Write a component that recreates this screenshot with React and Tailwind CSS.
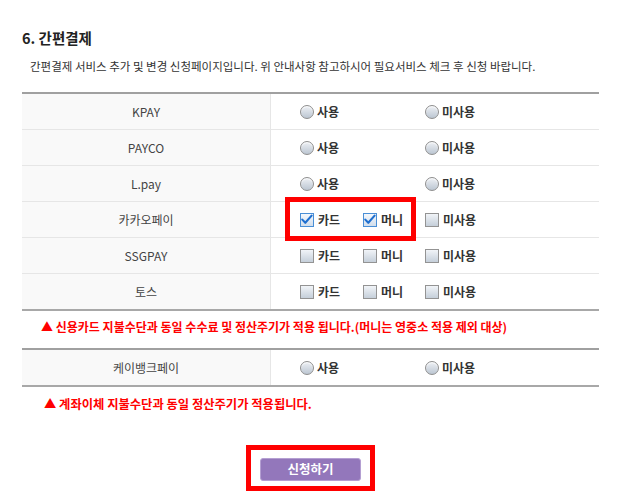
import React from "react";

const FONT = { fontFamily: '"Noto Sans CJK KR", "Noto Sans", sans-serif' };

function Radio({ label }) {
  return (
    <div className="flex items-center">
      <span className="w-[14px] h-[14px] rounded-full border border-[#8e8e8e] bg-gradient-to-b from-[#eef1f5] to-[#bcc6d2] shadow-[inset_0_1px_1px_rgba(255,255,255,0.9)]" />
      <span className="ml-[3px] text-[12px] font-semibold text-[#333] leading-[14px]">{label}</span>
    </div>
  );
}

function Check({ label, checked }) {
  return (
    <div className="flex items-center">
      {checked ? (
        <span className="w-[14px] h-[14px] border border-[#4a8fd6] bg-gradient-to-b from-[#f5f8fc] to-[#d2deec] flex items-center justify-center">
          <svg width="12" height="11" viewBox="0 0 12 11">
            <path d="M1.3 5.6 L4.3 8.8 L10.6 1.6" fill="none" stroke="#1f6fcf" strokeWidth="2.1" strokeLinecap="round" strokeLinejoin="round" />
          </svg>
        </span>
      ) : (
        <span className="w-[14px] h-[14px] border border-[#939393] bg-gradient-to-b from-[#f1f4f8] to-[#c5cfda]" />
      )}
      <span className="ml-[4px] text-[12px] font-semibold text-[#333] leading-[14px]">{label}</span>
    </div>
  );
}

function RadioCell() {
  return (
    <div className="flex items-center">
      <div className="w-[125px]"><Radio label="사용" /></div>
      <Radio label="미사용" />
    </div>
  );
}

function CheckCell({ c1, c2 }) {
  return (
    <div className="flex items-center">
      <div className="w-[63px]"><Check label="카드" checked={c1} /></div>
      <div className="w-[62px]"><Check label="머니" checked={c2} /></div>
      <Check label="미사용" />
    </div>
  );
}

function Row({ name, children, last, frame }) {
  return (
    <div className={`flex h-[36px] ${last ? "h-[37px] border-b-2 border-[#a8a8a8]" : "border-b border-[#e6e6e6]"}`}>
      <div className="w-[249px] bg-[#f9f9f9] border-r border-[#e6e6e6] flex items-center justify-center text-[12px] text-[#444]">
        {name}
      </div>
      <div className="relative flex-1 pl-[29px] flex items-center">
        {children}
        {frame && (
          <div className="absolute left-[14px] top-[-5px] w-[131px] h-[44px] border-[5px] border-[#ff0000]" />
        )}
      </div>
    </div>
  );
}

export default function App() {
  return (
    <div className="w-[620px] h-[500px] bg-white pl-[22px] pr-[21px] overflow-hidden" style={FONT}>
      <h2 className="pt-[28px] h-[48px] text-[14.5px] font-bold leading-[20px] text-[#222]">6. 간편결제</h2>
      <p className="mt-[9px] pl-[8px] text-[11.5px] leading-[18px] text-[#333] whitespace-nowrap">
        간편결제 서비스 추가 및 변경 신청페이지입니다. 위 안내사항 참고하시어 필요서비스 체크 후 신청 바랍니다.
      </p>
      <div className="mt-[17px] border-t-2 border-[#a0a0a0]">
        <Row name="KPAY"><RadioCell /></Row>
        <Row name="PAYCO"><RadioCell /></Row>
        <Row name="L.pay"><RadioCell /></Row>
        <Row name="카카오페이" frame><CheckCell c1 c2 /></Row>
        <Row name="SSGPAY"><CheckCell /></Row>
        <Row name="토스" last><CheckCell /></Row>
      </div>
      <div className="h-[37px] pt-[8px] pl-[19px] text-[12px] font-bold leading-[16px] text-[#ff0000] whitespace-nowrap">
        ▲ 신용카드 지불수단과 동일 수수료 및 정산주기가 적용 됩니다.(머니는 영중소 적용 제외 대상)
      </div>
      <div className="border-t-2 border-[#a0a0a0]">
        <Row name="케이뱅크페이" last><RadioCell /></Row>
      </div>
      <div className="pt-[9px] pl-[22px] text-[12.3px] font-bold leading-[16px] text-[#ff0000] whitespace-nowrap">
        ▲ 계좌이체 지불수단과 동일 정산주기가 적용됩니다.
      </div>
      <div className="mt-[33px] flex justify-center">
        <div className="border-[5px] border-[#ff0000] px-[9px] py-[5px]">
          <button className="w-[101px] h-[23px] rounded-[3px] bg-[#9377bb] border border-[#b49fd2] text-white text-[12.5px] font-bold leading-[20px]">
            신청하기
          </button>
        </div>
      </div>
    </div>
  );
}
